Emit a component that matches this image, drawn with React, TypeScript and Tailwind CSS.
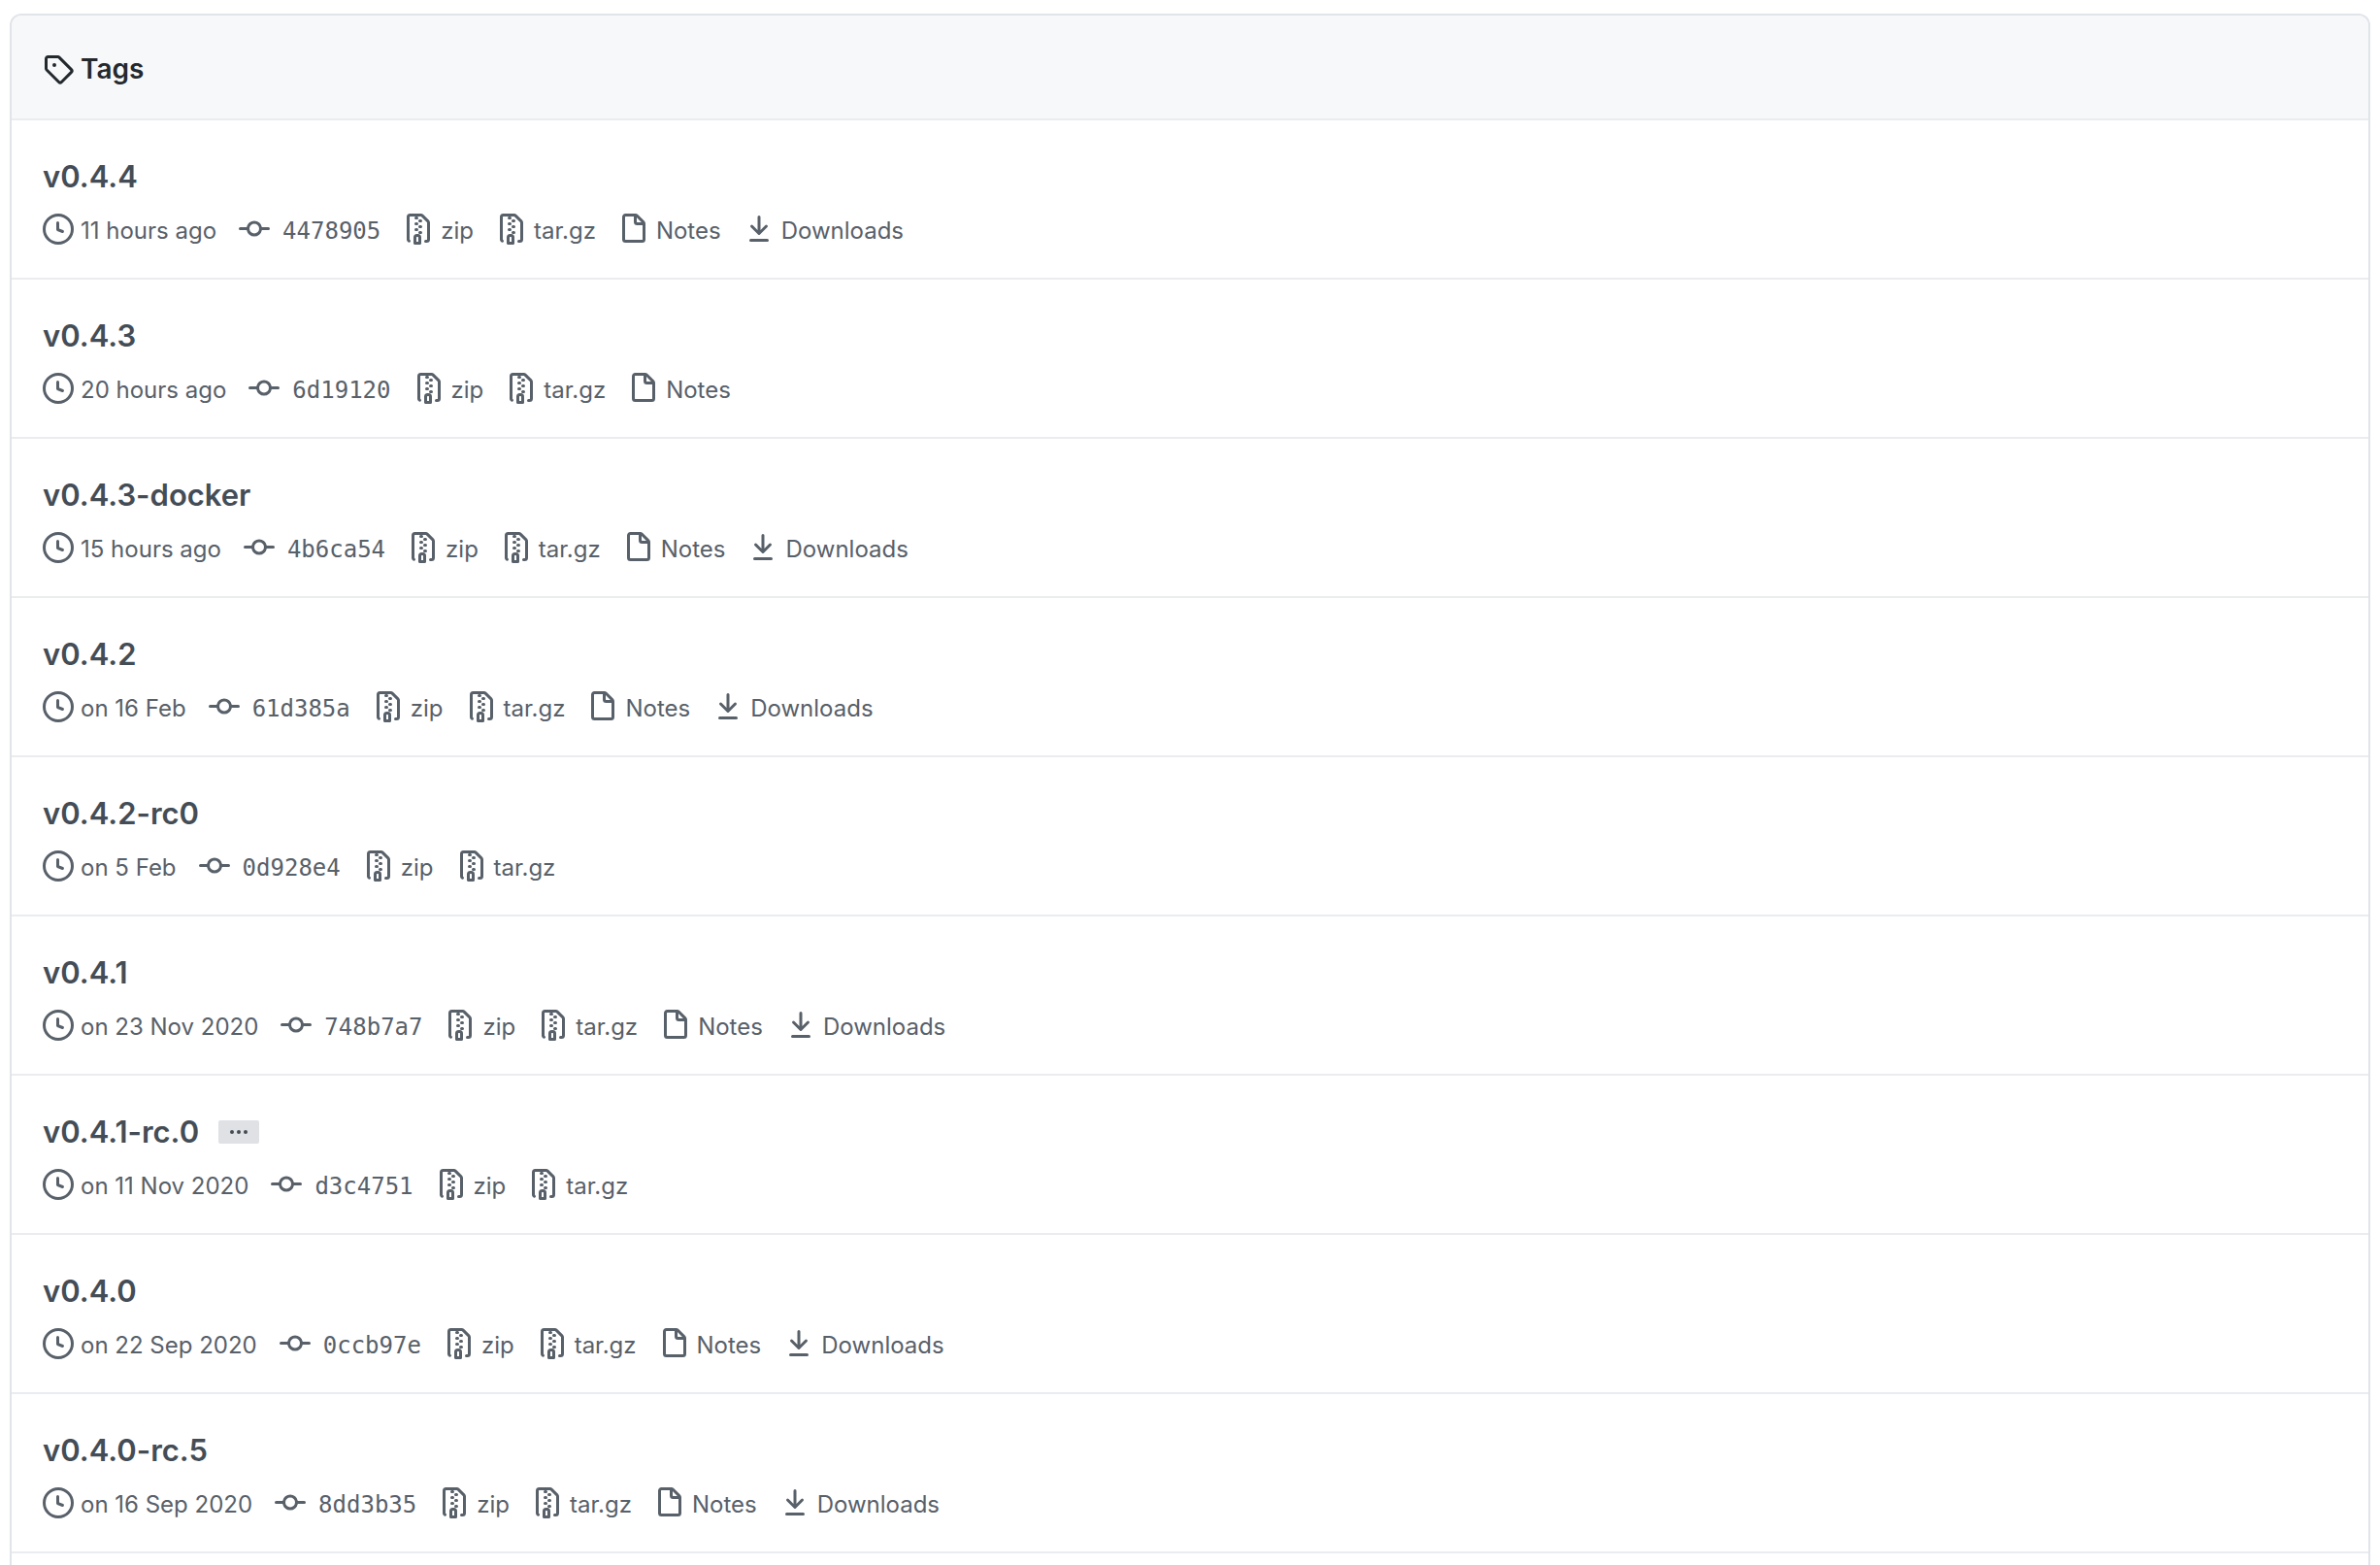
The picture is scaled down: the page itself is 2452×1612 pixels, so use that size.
import type { ReactNode } from "react";
import { clsx } from "clsx";

interface Tag {
  name: string;
  date: string;
  commit: string;
  notes?: boolean;
  downloads?: boolean;
  hasMessage?: boolean;
}

const tags: Tag[] = [
  { name: "v0.4.4", date: "11 hours ago", commit: "4478905", notes: true, downloads: true },
  { name: "v0.4.3", date: "20 hours ago", commit: "6d19120", notes: true },
  { name: "v0.4.3-docker", date: "15 hours ago", commit: "4b6ca54", notes: true, downloads: true },
  { name: "v0.4.2", date: "on 16 Feb", commit: "61d385a", notes: true, downloads: true },
  { name: "v0.4.2-rc0", date: "on 5 Feb", commit: "0d928e4" },
  { name: "v0.4.1", date: "on 23 Nov 2020", commit: "748b7a7", notes: true, downloads: true },
  { name: "v0.4.1-rc.0", date: "on 11 Nov 2020", commit: "d3c4751", hasMessage: true },
  { name: "v0.4.0", date: "on 22 Sep 2020", commit: "0ccb97e", notes: true, downloads: true },
  { name: "v0.4.0-rc.5", date: "on 16 Sep 2020", commit: "8dd3b35", notes: true, downloads: true }
];

const icons = {
  tag: "M2.5 7.775V2.75a.25.25 0 01.25-.25h5.025a.25.25 0 01.177.073l6.25 6.25a.25.25 0 010 .354l-5.025 5.025a.25.25 0 01-.354 0l-6.25-6.25a.25.25 0 01-.073-.177zm-1.5 0V2.75C1 1.784 1.784 1 2.75 1h5.025c.464 0 .91.184 1.238.513l6.25 6.25a1.75 1.75 0 010 2.474l-5.026 5.026a1.75 1.75 0 01-2.474 0l-6.25-6.25A1.75 1.75 0 011 7.775zM6 5a1 1 0 100 2 1 1 0 000-2z",
  clock: "M1.5 8a6.5 6.5 0 1113 0 6.5 6.5 0 01-13 0zM8 0a8 8 0 100 16A8 8 0 008 0zm.5 4.75a.75.75 0 00-1.5 0v3.5a.75.75 0 00.471.696l2.5 1a.75.75 0 00.557-1.392L8.5 7.742V4.75z",
  commit: "M10.5 7.75a2.5 2.5 0 11-5 0 2.5 2.5 0 015 0zm1.43.75a4.002 4.002 0 01-7.86 0H.75a.75.75 0 110-1.5h3.32a4.001 4.001 0 017.86 0h3.32a.75.75 0 110 1.5h-3.32z",
  zip: "M3.5 1.75a.25.25 0 01.25-.25h3a.75.75 0 000 1.5h.5a.75.75 0 000-1.5h2.086a.25.25 0 01.177.073l2.914 2.914a.25.25 0 01.073.177v8.586a.25.25 0 01-.25.25h-.5a.75.75 0 000 1.5h.5A1.75 1.75 0 0014 13.25V4.664c0-.464-.184-.909-.513-1.237L10.573.513A1.75 1.75 0 009.336 0H3.75A1.75 1.75 0 002 1.75v11.5c0 .649.353 1.214.874 1.515a.75.75 0 10.752-1.298.25.25 0 01-.126-.217V1.75zM8.75 3a.75.75 0 000 1.5h.5a.75.75 0 000-1.5h-.5zM6 5.25a.75.75 0 01.75-.75h.5a.75.75 0 010 1.5h-.5A.75.75 0 016 5.25zm2 1.5A.75.75 0 018.75 6h.5a.75.75 0 010 1.5h-.5A.75.75 0 018 6.75zm-1.25.75a.75.75 0 000 1.5h.5a.75.75 0 000-1.5h-.5zM8 9.75A.75.75 0 018.75 9h.5a.75.75 0 010 1.5h-.5A.75.75 0 018 9.75zm-.75.75a1.75 1.75 0 00-1.75 1.75v3c0 .414.336.75.75.75h2.5a.75.75 0 00.75-.75v-3a1.75 1.75 0 00-1.75-1.75h-.5zM7 12.25a.25.25 0 01.25-.25h.5a.25.25 0 01.25.25v2.25H7v-2.25z",
  file: "M3.75 1.5a.25.25 0 00-.25.25v11.5c0 .138.112.25.25.25h8.5a.25.25 0 00.25-.25V6H9.75A1.75 1.75 0 018 4.25V1.5H3.75zm5.75.56v2.19c0 .138.112.25.25.25h2.19L9.5 2.06zM2 1.75C2 .784 2.784 0 3.75 0h5.086c.464 0 .909.184 1.237.513l3.414 3.414c.329.328.513.773.513 1.237v8.086A1.75 1.75 0 0112.25 15h-8.5A1.75 1.75 0 012 13.25V1.75z",
  download: "M7.47 10.78a.75.75 0 001.06 0l3.75-3.75a.75.75 0 00-1.06-1.06L8.75 8.44V1.75a.75.75 0 00-1.5 0v6.69L4.78 5.97a.75.75 0 00-1.06 1.06l3.75 3.75zM3.75 13a.75.75 0 000 1.5h8.5a.75.75 0 000-1.5h-8.5z"
};

function Icon({ name }: { name: keyof typeof icons }) {
  return (
    <svg className="h-8 w-8 shrink-0" viewBox="0 0 16 16" fill="currentColor" fillRule="evenodd" aria-hidden="true">
      <path d={icons[name]} />
    </svg>
  );
}

function MetaLink({ icon, mono, children }: { icon: keyof typeof icons; mono?: boolean; children: ReactNode }) {
  return (
    <a href="#" className={clsx("flex hover:text-[#0366d6]", mono ? "gap-[13px]" : "gap-[7px]")}>
      <Icon name={icon} />
      <span className={clsx("pt-0.5 leading-8", mono && "font-['DejaVu_Sans_Mono',monospace]")}>{children}</span>
    </a>
  );
}

function TagRow({ tag }: { tag: Tag }) {
  return (
    <li className="border-b-2 border-[#eaecef] px-8 pt-[38px] pb-8">
      <div className="flex items-center gap-5">
        <h4 className="text-[31px] leading-10 font-semibold text-[#444d56]">
          <a href="#">{tag.name}</a>
        </h4>
        {tag.hasMessage ? (
          <button
            type="button"
            aria-label="Show tag message"
            className="flex h-6 items-center gap-[3px] rounded-xs bg-[#dfe1e5] px-3 text-[#444d56]"
          >
            <span className="h-1 w-1 rounded-full bg-current" />
            <span className="h-1 w-1 rounded-full bg-current" />
            <span className="h-1 w-1 rounded-full bg-current" />
          </button>
        ) : null}
      </div>
      <div className="mt-[18px] flex h-[34px] gap-[23px] text-2xl text-[#586069]">
        <div className="flex gap-[7px]">
          <Icon name="clock" />
          <span className="pt-0.5 leading-8">{tag.date}</span>
        </div>
        <MetaLink icon="commit" mono>{tag.commit}</MetaLink>
        <MetaLink icon="zip">zip</MetaLink>
        <MetaLink icon="zip">tar.gz</MetaLink>
        {tag.notes ? <MetaLink icon="file">Notes</MetaLink> : null}
        {tag.downloads ? <MetaLink icon="download">Downloads</MetaLink> : null}
      </div>
    </li>
  );
}

export default function App() {
  return (
    <div className="h-screen overflow-hidden bg-white px-2.5 pt-3.5 font-[Inter,sans-serif]">
      <section className="overflow-hidden rounded-t-xl border-2 border-b-0 border-[#e1e4e8]">
        <header className="border-b-2 border-[#eaecef] bg-[#f6f8fa] px-8 pt-[34px] pb-[30px] text-[#24292e]">
          <h3 className="flex items-center gap-[7px] text-[28px] leading-[42px] font-semibold">
            <Icon name="tag" />
            Tags
          </h3>
        </header>
        <ul>
          {tags.map((tag) => (
            <TagRow key={tag.name} tag={tag} />
          ))}
        </ul>
        <div className="h-8" />
      </section>
    </div>
  );
}
